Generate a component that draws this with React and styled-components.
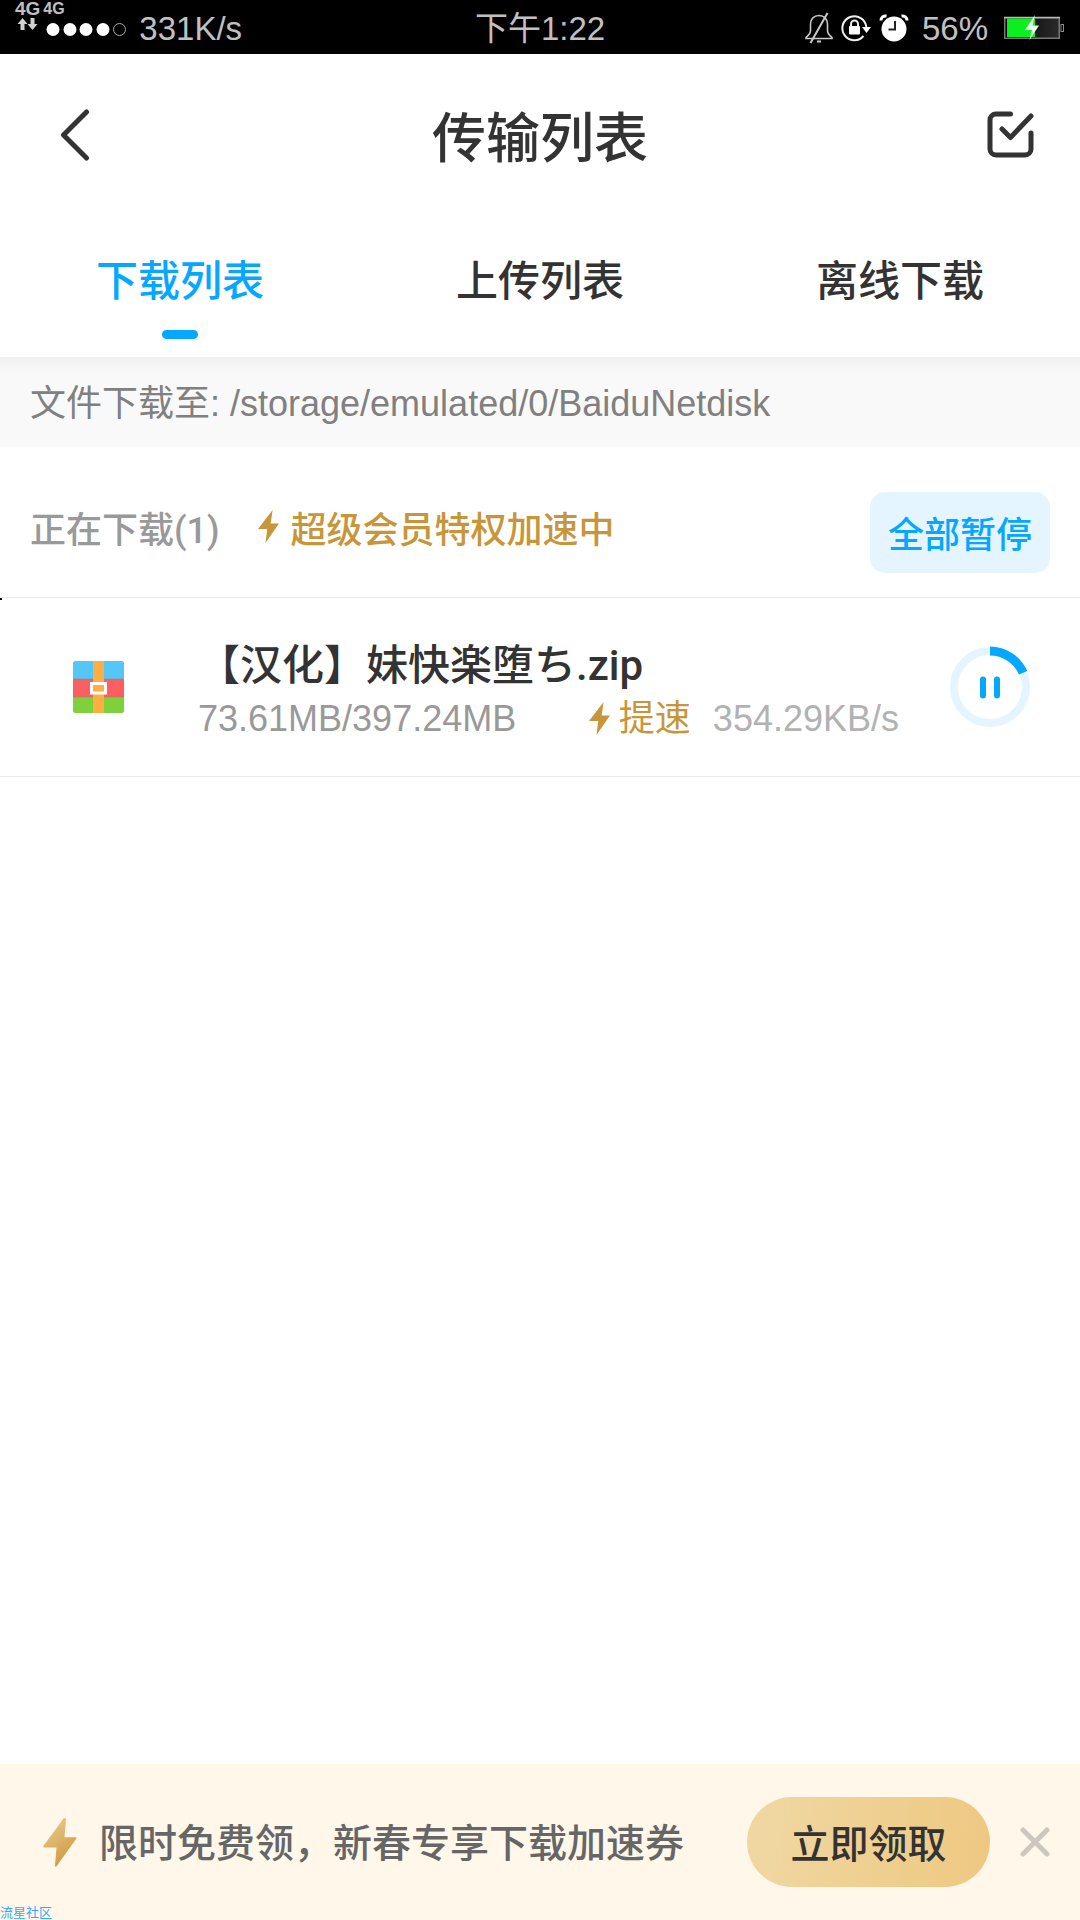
import React, { useState } from "react";
import styled, { createGlobalStyle } from "styled-components";

const GlobalStyle = createGlobalStyle`
    * { box-sizing: border-box; }
    body {
        margin: 0;
        background: #fff;
        color: #333;
        font-family: Roboto, "Noto Sans CJK SC", sans-serif;
    }
    button {
        padding: 0;
        border: 0;
        background: none;
        color: inherit;
        font-family: inherit;
        cursor: pointer;
    }
    svg { display: block; flex: none; }
`;

const plainFont = `"Liberation Sans", "Noto Sans CJK SC", sans-serif`;

const Page = styled.div`
    display: flex;
    flex-direction: column;
    min-height: 100vh;
`;

const StatusBar = styled.div`
    display: grid;
    grid-template-columns: 1fr auto 1fr;
    height: 54px;
    background: #000;
    color: #c0c0c0;
    font-family: ${plainFont};
    font-size: 33px;
    line-height: 58px;
`;

const StatusLeft = styled.div`
    display: flex;
    padding-left: 15px;
`;

const StatusRight = styled.div`
    display: flex;
    align-items: center;
    justify-content: flex-end;
    padding-right: 16px;
`;

const Signal = styled.div`
    display: flex;
    flex-direction: column;
    gap: ${(props) => props.$gap};
    margin-right: ${(props) => props.$after};
    font-size: ${(props) => props.$size};
    font-weight: 700;
    line-height: 18px;
`;

const StatusIcons = styled.div`
    display: flex;
    align-items: center;
    gap: 8px;
    margin-right: 13px;
    padding-bottom: 2px;
`;

const Battery = styled.div`
    margin-left: 16px;
    padding-bottom: 2px;
`;

const Header = styled.header`
    display: grid;
    grid-template-columns: 1fr auto 1fr;
    align-items: center;
    height: 162px;
    padding: 0 46px;
`;

const Title = styled.h1`
    margin: 0;
    padding-top: 10px;
    font-size: 54px;
    font-weight: 500;
    line-height: 64px;
`;

const IconButton = styled.button`
    justify-self: ${(props) => props.$side || "start"};
`;

const BackButton = styled(IconButton)`
    padding-left: 14px;
`;

const Tabs = styled.nav`
    display: grid;
    grid-template-columns: repeat(3, 1fr);
    height: 141px;
    padding-top: 38px;
`;

const Tab = styled.button`
    display: flex;
    flex-direction: column;
    align-items: center;
    gap: 20px;
    color: ${(props) => (props.$active ? "#06a7ff" : "#333")};
    font-size: 42px;
    font-weight: 500;
    line-height: 56px;

    &::after {
        content: "";
        width: 36px;
        height: 9px;
        border-radius: 5px;
        background: ${(props) => (props.$active ? "#06a7ff" : "transparent")};
    }
`;

const PathBar = styled.div`
    height: 90px;
    padding: 2px 30px 0;
    background: linear-gradient(#f0f0f0, #f9f9f9 16px);
    color: #808080;
    font-family: ${plainFont};
    font-size: 36px;
    line-height: 90px;
`;

const SectionHead = styled.div`
    display: flex;
    align-items: center;
    height: 151px;
    padding: 10px 30px 0;
    border-bottom: 1px solid #ececec;
    font-size: 36px;
    font-weight: 500;
`;

const SectionTitle = styled.h2`
    margin: 0 38px 0 0;
    color: #999;
    font-size: 36px;
    font-weight: 500;
`;

const Boost = styled.div`
    display: flex;
    align-items: center;
    gap: ${(props) => props.$gap};
    color: #c8963a;

    svg { margin-bottom: 2px; }
`;

const PauseAll = styled.button`
    width: 180px;
    height: 81px;
    margin-top: 10px;
    margin-left: auto;
    border-radius: 15px;
    background: #e4f5ff;
    color: #06a7ff;
    font-size: 36px;
    font-weight: 500;
`;

const FileRow = styled.div`
    position: relative;
    display: flex;
    align-items: center;
    height: 179px;
    padding: 0 49px 0 73px;
    border-bottom: 1px solid #ececec;

    &::before {
        content: "";
        position: absolute;
        top: 0;
        left: 0;
        width: 2px;
        height: 2px;
        background: #000;
    }
`;

const FileInfo = styled.div`
    flex: 1;
    margin: 0 50px 0 74px;
    padding-top: 8px;
`;

const FileName = styled.div`
    font-size: 42px;
    font-weight: 500;
    line-height: 56px;
`;

const FileMeta = styled.div`
    display: flex;
    align-items: center;
    color: #999;
    font-family: ${plainFont};
    font-size: 36px;
    line-height: 50px;
`;

const Speed = styled.span`
    margin-left: 22px;
    color: #b2b2b2;
`;

const Spacer = styled.div`
    flex: 1;
`;

const Banner = styled.aside`
    position: relative;
    display: flex;
    align-items: center;
    height: 156px;
    margin-top: auto;
    padding: 0 30px 0 43px;
    background: #fff7ea;
    font-size: 39px;
    font-weight: 500;
`;

const BannerText = styled.div`
    flex: 1;
    margin-left: 22px;
    padding-bottom: 4px;
    color: #666;
`;

const ClaimButton = styled.button`
    width: 243px;
    height: 90px;
    margin-right: 30px;
    padding-bottom: 2px;
    border-radius: 45px;
    background: linear-gradient(100deg, #f0d8a4, #eec880);
    color: #333;
    font-size: 39px;
    font-weight: 500;
`;

const Watermark = styled.span`
    position: absolute;
    bottom: 0;
    left: 0;
    color: #38a8f8;
    font-size: 13px;
    font-weight: 400;
    line-height: 14px;
`;

const Bolt = () => (
    <svg width="21" height="33" viewBox="0 0 21 33" fill="#c8963a">
        <path d="M14.600 0 0 19h9.200L7.500 33 21 13.500h-8.300z" />
    </svg>
);

const BannerBolt = () => (
    <svg width="34" height="49" viewBox="0 0 34 49">
        <defs>
            <linearGradient id="bolt" x1="0" y1="0" x2="0.6" y2="1">
                <stop offset="0" stopColor="#ead09a" />
                <stop offset="1" stopColor="#cf9a40" />
            </linearGradient>
        </defs>
        <path fill="url(#bolt)" d="M20.500.6 .4 28c-.6 1-.3 1.600.8 1.600H13.500L12 47.500c0 1.400 1 1.500 1.800.5L33.200 20.800c.6-1 .3-1.500-.8-1.500H21.500L23 1.600C23 .2 21.400-.5 20.500.6z" />
    </svg>
);

const StatusGlyphs = () => (
    <StatusIcons>
        <svg width="28" height="32" viewBox="0 0 28 32" fill="none" stroke="#c8c8c8" strokeWidth="1.600">
            <path d="M5.500 19V12c0-5 3.500-8.500 8.500-8.500S22.500 7 22.500 12v7c0 3 2 4 4.500 6.500v1H1v-1C3.500 23 5.500 22 5.500 19z" />
            <path d="M12 29.500h4M22.500 1 5.500 31" strokeWidth="2" />
        </svg>
        <svg width="30" height="28" viewBox="0 0 30 28" fill="none" stroke="#f0f0f0" strokeWidth="2">
            <path d="M22.500 22A12 12 0 1 1 25.300 13" />
            <path d="M21 13h9l-4.500 6z" fill="#fff" stroke="none" />
            <rect x="8" y="12" width="11" height="8.500" rx="1" fill="#fff" stroke="none" />
            <path d="M10 12.500V10a3.500 3.500 0 0 1 7 0v2.500" />
        </svg>
        <svg width="30" height="28" viewBox="0 0 30 28" fill="#fff">
            <circle cx="15" cy="15" r="12.500" />
            <path d="M2 6.500C2 3.500 4.500 1.500 7.500 2M28 6.500C28 3.500 25.500 1.500 22.500 2" fill="none" stroke="#fff" strokeWidth="3" />
            <path d="M16 7v8.500H9.500" fill="none" stroke="#222" strokeWidth="2" />
        </svg>
    </StatusIcons>
);

const BatteryIcon = () => (
    <svg width="60" height="26" viewBox="0 0 60 26">
        <defs>
            <linearGradient id="cell" x1="0" x2="1">
                <stop offset="0" stopColor="#000" />
                <stop offset="1" stopColor="#2b2b2b" />
            </linearGradient>
        </defs>
        <rect x=".75" y="2.750" width="54.500" height="20.500" fill="url(#cell)" stroke="#777" strokeWidth="1.500" />
        <path d="M0 2.500h56" stroke="#bbb" strokeWidth="1.500" />
        <rect x="3" y="3.500" width="28" height="18.500" fill="#0af01e" />
        <rect x="57" y="9.500" width="2.500" height="7" fill="none" stroke="#888" />
        <path d="M31 0 21 15h7l-2.500 10L35 10.500h-6.500z" fill="#efffef" />
    </svg>
);

const ZipIcon = () => (
    <svg width="51" height="52" viewBox="0 0 51 52">
        <path d="M2.500 0h46A2.500 2.500 0 0 1 51 2.500V18H0V2.500A2.500 2.500 0 0 1 2.500 0z" fill="#54c6f8" />
        <path d="M0 18h51v18H0z" fill="#fc5f5f" />
        <path d="M0 36h51v13.500a2.500 2.500 0 0 1-2.500 2.500h-46A2.500 2.500 0 0 1 0 49.500z" fill="#7fd13b" />
        <path d="M0 18h51M0 36h51" stroke="#8a8a5c" strokeOpacity=".5" />
        <path d="M20 0h11v52H20z" fill="#ffae42" />
        <rect x="18.500" y="22.500" width="14" height="9.500" fill="#ffae42" stroke="#fff" strokeWidth="3" />
    </svg>
);

const RADIUS = 36;
const LENGTH = 2 * Math.PI * RADIUS;

const ProgressRing = ({ done, total, paused }) => (
    <svg width="82" height="82" viewBox="0 0 82 82" fill="none">
        <circle cx="41" cy="41" r={RADIUS} stroke="#e4f5ff" strokeWidth="8" />
        <circle
            cx="41"
            cy="41"
            r={RADIUS}
            stroke="#06a7ff"
            strokeWidth="9"
            strokeDasharray={`${(LENGTH * done) / total} ${LENGTH}`}
            transform="rotate(-90 41 41)"
        />
        {paused
            ? <path d="M34 29v24l18-12z" fill="#06a7ff" />
            : <path d="M34 33.500v16M48 33.500v16" stroke="#06a7ff" strokeWidth="6" strokeLinecap="round" />}
    </svg>
);

const tabs = ["下载列表", "上传列表", "离线下载"];

const App = () => {
    const [active, setActive] = useState(0);
    const [paused, setPaused] = useState(false);
    const [showBanner, setShowBanner] = useState(true);

    return (
        <Page>
            <GlobalStyle />
            <StatusBar>
                <StatusLeft>
                    <Signal $size="19px" $gap="0px" $after="3px">
                        4G
                        <svg width="25" height="12" viewBox="0 0 25 12" fill="#d0d0d0">
                            <path d="M7.500 0 12.500 6H9.500v6h-4V6h-3zM17.500 12l-5-6h3V0h4v6h3z" />
                        </svg>
                    </Signal>
                    <Signal $size="16px" $gap="3px" $after="12px">
                        4G
                        <svg width="84" height="16" viewBox="0 0 84 16" fill="#fff">
                            {[10, 27, 43, 60].map((cx) => <circle key={cx} cx={cx} cy="8.500" r="6.500" />)}
                            <circle cx="76.500" cy="8.500" r="6" fill="none" stroke="#aaa" />
                        </svg>
                    </Signal>
                    331K/s
                </StatusLeft>
                <div>下午1:22</div>
                <StatusRight>
                    <StatusGlyphs />
                    56%
                    <Battery><BatteryIcon /></Battery>
                </StatusRight>
            </StatusBar>

            <Header>
                <BackButton aria-label="返回">
                    <svg width="30" height="52" viewBox="0 0 30 52" fill="none" stroke="#333" strokeWidth="5" strokeLinecap="round" strokeLinejoin="round">
                        <path d="M26.500 3 3.500 26l23 23" />
                    </svg>
                </BackButton>
                <Title>传输列表</Title>
                <IconButton aria-label="选择" $side="end">
                    <svg width="48" height="48" viewBox="0 0 48 48" fill="none" stroke="#333" strokeWidth="5" strokeLinecap="round" strokeLinejoin="round">
                        <path d="M24.500 3H10A6 6 0 0 0 4 9v29a6 6 0 0 0 6 6h29a6 6 0 0 0 6-6V22" />
                        <path d="M16 18l8.500 8.500L45 5" />
                    </svg>
                </IconButton>
            </Header>

            <Tabs>
                {tabs.map((name, index) => (
                    <Tab key={name} $active={index === active} onClick={() => setActive(index)}>
                        {name}
                    </Tab>
                ))}
            </Tabs>

            <PathBar>文件下载至: /storage/emulated/0/BaiduNetdisk</PathBar>

            <SectionHead>
                <SectionTitle>正在下载(1)</SectionTitle>
                <Boost $gap="12px">
                    <Bolt />
                    超级会员特权加速中
                </Boost>
                <PauseAll onClick={() => setPaused(true)}>全部暂停</PauseAll>
            </SectionHead>

            <FileRow>
                <ZipIcon />
                <FileInfo>
                    <FileName>【汉化】妹快楽堕ち.zip</FileName>
                    <FileMeta>
                        73.61MB/397.24MB
                        <Spacer />
                        <Boost $gap="9px">
                            <Bolt />
                            提速
                        </Boost>
                        <Speed>354.29KB/s</Speed>
                    </FileMeta>
                </FileInfo>
                <IconButton aria-label="暂停" onClick={() => setPaused(!paused)}>
                    <ProgressRing done={73.61} total={397.24} paused={paused} />
                </IconButton>
            </FileRow>

            {showBanner && (
                <Banner>
                    <BannerBolt />
                    <BannerText>限时免费领，新春专享下载加速券</BannerText>
                    <ClaimButton>立即领取</ClaimButton>
                    <IconButton aria-label="关闭" onClick={() => setShowBanner(false)}>
                        <svg width="30" height="30" viewBox="0 0 30 30" stroke="#ccc8c0" strokeWidth="5" strokeLinecap="round">
                            <path d="M3 3l24 24M27 3 3 27" />
                        </svg>
                    </IconButton>
                    <Watermark>流星社区</Watermark>
                </Banner>
            )}
        </Page>
    );
};

export default App;
